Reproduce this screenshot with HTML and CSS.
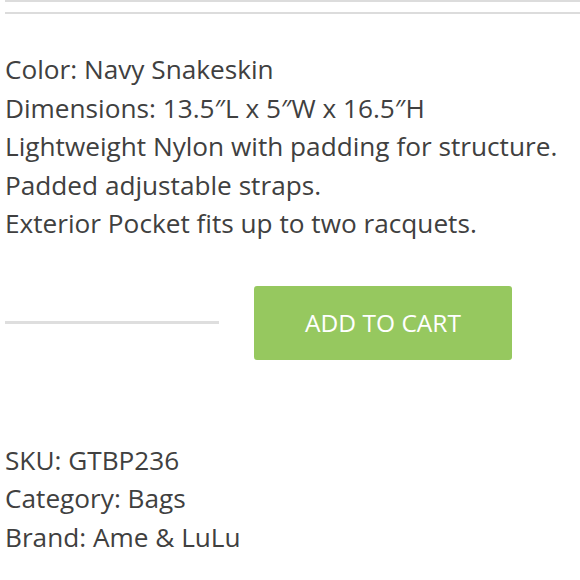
FILE: index.html
```html
<!DOCTYPE html>
<html>
<head>
<meta charset="utf-8">
<link rel="stylesheet" href="styles.css">
</head>
<body>
<div class="rule rule-top"></div>
<div class="rule rule-second"></div>
<div class="desc">
  <p>Color: Navy Snakeskin</p>
  <p>Dimensions: 13.5″L x 5″W x 16.5″H</p>
  <p>Lightweight Nylon with padding for structure.</p>
  <p>Padded adjustable straps.</p>
  <p>Exterior Pocket fits up to two racquets.</p>
</div>
<div class="cart">
  <div class="qty"></div>
  <button class="add">ADD TO CART</button>
</div>
<div class="meta">
  <p>SKU: GTBP236</p>
  <p>Category: Bags</p>
  <p>Brand: Ame &amp; LuLu</p>
</div>
</body>
</html>
```
FILE: styles.css
```css
html, body {
  margin: 0;
  padding: 0;
  background: #fff;
}
body {
  font-family: "Open Sans", sans-serif;
  color: #404040;
  width: 580px;
  height: 580px;
  overflow: hidden;
}
.rule {
  margin-left: 5px;
  height: 2px;
  background: #dcdcdc;
}
.rule-top {
  margin-top: 0;
}
.rule-second {
  margin-top: 10px;
}
.desc {
  margin-top: 36px;
  padding-left: 5px;
  font-size: 26.2px;
  line-height: 38.5px;
}
.desc p, .meta p {
  margin: 0;
  white-space: nowrap;
}
.cart {
  margin-top: 43px;
  display: flex;
  align-items: center;
  padding-left: 5px;
}
.qty {
  width: 214px;
  height: 3px;
  background: #dedede;
}
.add {
  margin-left: 35px;
  width: 258px;
  height: 74px;
  border: none;
  border-radius: 3px;
  background: #96c85f;
  color: #fff;
  font-family: "Open Sans", sans-serif;
  font-size: 24.5px;
  padding: 0;
}
.meta {
  margin-top: 81px;
  padding-left: 5px;
  font-size: 26.2px;
  line-height: 38.5px;
}
```
